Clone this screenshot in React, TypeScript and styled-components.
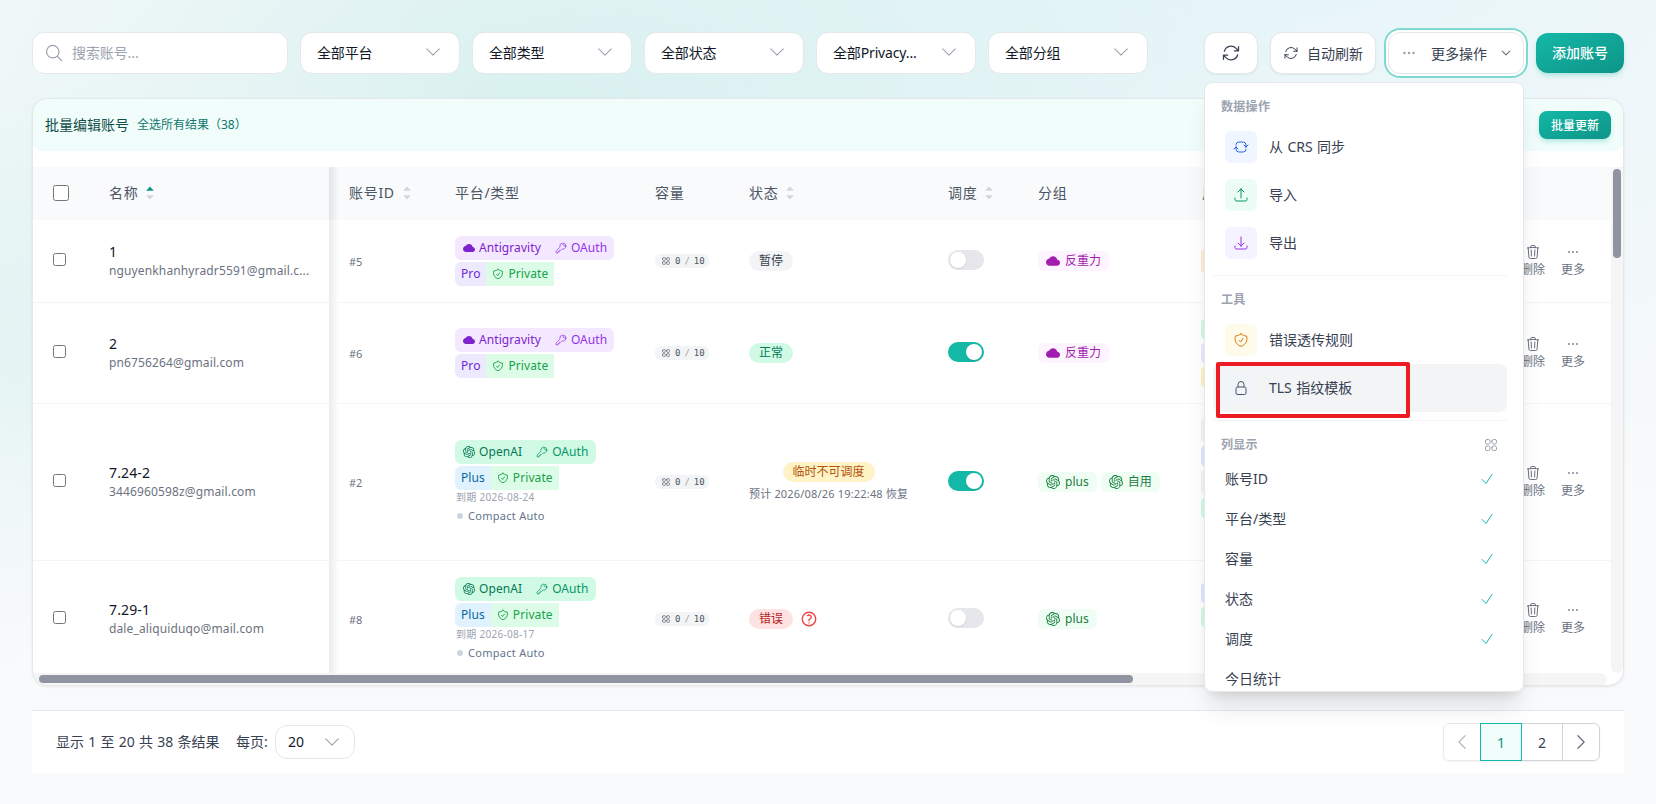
import React from 'react';
import styled, { createGlobalStyle, css } from 'styled-components';
import { SiOpenai } from 'react-icons/si';

const GlobalStyle = createGlobalStyle`
  *, *::before, *::after { box-sizing: border-box; }
  body {
    margin: 0;
    height: 804px;
    overflow: hidden;
    font-family: 'Noto Sans', 'Noto Sans CJK SC', sans-serif;
    font-size: 14px;
    line-height: 20px;
    color: #111827;
    background-color: #f9fafb;
    background-image:
      radial-gradient(at 40% 20%, rgba(20, 184, 166, 0.12) 0px, transparent 50%),
      radial-gradient(at 80% 0%, rgba(6, 182, 212, 0.08) 0px, transparent 50%),
      radial-gradient(at 0% 50%, rgba(20, 184, 166, 0.08) 0px, transparent 50%);
    background-size: 1912px 868px;
    background-position: -256px -64px;
    background-repeat: no-repeat;
  }
  button, input { font-family: inherit; }
`;

/* ---------- icons ---------- */

const paths = {
  refresh:
    'M16.023 9.348h4.992v-.001M2.985 19.644v-4.992m0 0h4.992m-4.993 0l3.181 3.183a8.25 8.25 0 0013.803-3.7M4.031 9.865a8.25 8.25 0 0113.803-3.7l3.181 3.182m0-4.991v4.99',
  search: 'M21 21l-5.197-5.197m0 0A7.5 7.5 0 105.196 5.196a7.5 7.5 0 0010.607 10.607z',
  chevron: 'M19.5 8.25l-7.5 7.5-7.5-7.5',
  left: 'M15.75 19.5L8.25 12l7.5-7.5',
  right: 'M8.25 4.5l7.5 7.5-7.5 7.5',
  sync: 'M19.5 12c0-1.232-.046-2.453-.138-3.662a4.006 4.006 0 00-3.7-3.7 48.678 48.678 0 00-7.324 0 4.006 4.006 0 00-3.7 3.7c-.017.22-.032.441-.046.662M19.5 12l3-3m-3 3l-3-3m-12 3c0 1.232.046 2.453.138 3.662a4.006 4.006 0 003.7 3.7 48.656 48.656 0 007.324 0 4.006 4.006 0 003.7-3.7c.017-.22.032-.441.046-.662M4.5 12l3 3m-3-3l-3 3',
  upload:
    'M3 16.5v2.25A2.25 2.25 0 005.25 21h13.5A2.25 2.25 0 0021 18.75V16.5m-13.5-9L12 3m0 0l4.5 4.5M12 3v13.5',
  download:
    'M3 16.5v2.25A2.25 2.25 0 005.25 21h13.5A2.25 2.25 0 0021 18.75V16.5M16.5 12L12 16.5m0 0L7.5 12m4.5 4.5V3',
  shield:
    'M9 12.75L11.25 15 15 9.75m-3-7.036A11.959 11.959 0 013.598 6 11.99 11.99 0 003 9.749c0 5.592 3.824 10.29 9 11.623 5.176-1.332 9-6.03 9-11.622 0-1.31-.21-2.571-.598-3.751h-.152c-3.196 0-6.1-1.248-8.25-3.285z',
  lock: 'M16.5 10.5V6.75a4.5 4.5 0 10-9 0v3.75m-.75 11.25h10.5a2.25 2.25 0 002.25-2.25v-6.75a2.25 2.25 0 00-2.25-2.25H6.75a2.25 2.25 0 00-2.25 2.25v6.75a2.25 2.25 0 002.25 2.25z',
  trash:
    'M14.74 9l-.346 9m-4.788 0L9.26 9m9.968-3.21c.342.052.682.107 1.022.166m-1.022-.165L18.16 19.673a2.25 2.25 0 01-2.244 2.077H8.084a2.25 2.25 0 01-2.244-2.077L4.772 5.79m14.456 0a48.108 48.108 0 00-3.478-.397m-12 .562c.34-.059.68-.114 1.022-.165m0 0a48.11 48.11 0 013.478-.397m7.5 0v-.916c0-1.18-.91-2.164-2.09-2.201a51.964 51.964 0 00-3.32 0c-1.18.037-2.09 1.022-2.09 2.201v.916m7.5 0a48.667 48.667 0 00-7.5 0',
  key: 'M15.75 5.25a3 3 0 013 3m3 0a6 6 0 01-7.029 5.912c-.563-.097-1.159.026-1.563.43L10.5 17.25H8.25v2.25H6v2.25H2.25v-2.818c0-.597.237-1.17.659-1.591l6.499-6.499c.404-.404.527-1 .43-1.563A6 6 0 1121.75 8.25z',
  grid: 'M3.75 6A2.25 2.25 0 016 3.75h2.25A2.25 2.25 0 0110.5 6v2.25a2.25 2.25 0 01-2.25 2.25H6a2.25 2.25 0 01-2.25-2.25V6zM3.75 15.75A2.25 2.25 0 016 13.5h2.25a2.25 2.25 0 012.25 2.25V18a2.25 2.25 0 01-2.25 2.25H6A2.25 2.25 0 013.75 18v-2.25zM13.5 6a2.25 2.25 0 012.25-2.25H18A2.25 2.25 0 0120.25 6v2.25A2.25 2.25 0 0118 10.5h-2.25a2.25 2.25 0 01-2.25-2.25V6zM13.5 15.75a2.25 2.25 0 012.25-2.25H18a2.25 2.25 0 012.25 2.25V18A2.25 2.25 0 0118 20.25h-2.25A2.25 2.25 0 0113.5 18v-2.25z',
  help: 'M9.879 7.519c1.171-1.025 3.071-1.025 4.242 0 1.172 1.025 1.172 2.687 0 3.712-.203.179-.43.326-.67.442-.745.361-1.45.999-1.45 1.827v.75M21 12a9 9 0 11-18 0 9 9 0 0118 0zm-9 5.25h.008v.008H12v-.008z',
  check: 'M4.5 12.75l6 6 9-13.5',
  dots: 'M6.75 12a.75.75 0 11-1.5 0 .75.75 0 011.5 0zM12.75 12a.75.75 0 11-1.5 0 .75.75 0 011.5 0zM18.75 12a.75.75 0 11-1.5 0 .75.75 0 011.5 0z',
};

type IconName = keyof typeof paths;

const Svg = styled.svg`
  flex: none;
  display: block;
`;

function Icon({ name, size = 16, stroke = 1.5, color }: { name: IconName; size?: number; stroke?: number; color?: string }) {
  return (
    <Svg width={size} height={size} viewBox="0 0 24 24" fill="none" stroke={color ?? 'currentColor'} strokeWidth={stroke} strokeLinecap="round" strokeLinejoin="round">
      <path d={paths[name]} />
    </Svg>
  );
}

function Cloud({ size = 12 }: { size?: number }) {
  return (
    <Svg width={size} height={size} viewBox="0 0 24 24" fill="currentColor">
      <path d="M19.35 10.04C18.67 6.59 15.64 4 12 4 9.11 4 6.6 5.64 5.35 8.04 2.34 8.36 0 10.91 0 14c0 3.31 2.69 6 6 6h13c2.76 0 5-2.24 5-5 0-2.64-2.05-4.78-4.65-4.96z" />
    </Svg>
  );
}

/* ---------- toolbar ---------- */

const Page = styled.main`
  width: 1656px;
  height: 804px;
  padding: 32px;
  display: flex;
  flex-direction: column;
`;

const Toolbar = styled.div`
  display: flex;
  align-items: center;
  gap: 12px;
  height: 42px;
`;

const field = css`
  height: 42px;
  display: flex;
  align-items: center;
  background: #fff;
  border: 1px solid #e5e7eb;
  border-radius: 12px;
`;

const SearchBox = styled.label`
  ${field}
  width: 256px;
  padding: 0 11px 1px;
  gap: 8px;
  color: #9ca3af;
`;

const SearchInput = styled.input`
  border: 0;
  outline: 0;
  padding: 0;
  width: 190px;
  height: 24px;
  font-size: 14px;
  letter-spacing: -0.1px;
  background: transparent;
  &::placeholder { color: #9ca3af; }
`;

const Select = styled.button<{ $small?: boolean }>`
  ${field}
  width: ${(p) => (p.$small ? '80px' : '160px')};
  height: ${(p) => (p.$small ? '34px' : '42px')};
  padding: ${(p) => (p.$small ? '0 12px 1px' : '0 16px 2px')};
  justify-content: space-between;
  font-size: 14px;
  color: #111827;
`;

const FilterText = styled.span`
  letter-spacing: -0.15px;
`;

const Spacer = styled.div`
  flex: 1;
`;

const SecondaryButton = styled.button<{ $w: number; $focus?: boolean; $gap?: number }>`
  ${field}
  width: ${(p) => p.$w}px;
  padding: 0 0 1px;
  justify-content: center;
  gap: ${(p) => p.$gap ?? 8}px;
  font-size: 14px;
  color: #374151;
  box-shadow: ${(p) => (p.$focus ? '0 0 0 2px #fff, 0 0 0 4px #80d9d0' : '0 1px 2px rgba(0, 0, 0, 0.06)')};
`;

const PrimaryButton = styled.button<{ $small?: boolean }>`
  border: 0;
  color: #fff;
  background: linear-gradient(to right bottom, #14b8a6, #0d9488);
  box-shadow: 0 3px 5px -1px rgba(20, 184, 166, 0.35);
  width: ${(p) => (p.$small ? '72px' : '88px')};
  height: ${(p) => (p.$small ? '28px' : '40px')};
  border-radius: ${(p) => (p.$small ? '8px' : '12px')};
  font-size: ${(p) => (p.$small ? '12px' : '14px')};
  font-weight: 500;
  padding: 0 0 ${(p) => (p.$small ? 1 : 2)}px;
`;

const MenuAnchor = styled.div`
  position: relative;
`;

/* ---------- dropdown menu ---------- */

const Menu = styled.div`
  position: absolute;
  z-index: 10;
  top: 50px;
  right: 0;
  width: 320px;
  height: 610px;
  padding: 8px 16px 0 8px;
  overflow: hidden;
  background: #fff;
  border: 1px solid #e5e7eb;
  border-radius: 8px;
  box-shadow: 0 20px 25px -5px rgba(0, 0, 0, 0.1), 0 8px 10px -6px rgba(0, 0, 0, 0.1);
`;

const MenuLabel = styled.div<{ $columns?: boolean }>`
  display: flex;
  align-items: center;
  justify-content: space-between;
  height: ${(p) => (p.$columns ? 30 : 32)}px;
  padding: ${(p) => (p.$columns ? 2 : 0)}px 8px 0;
  font-size: 12px;
  font-weight: 600;
  letter-spacing: 0.3px;
  color: #9ca3af;
`;

const MenuItem = styled.div<{ $active?: boolean }>`
  position: relative;
  display: flex;
  align-items: center;
  gap: 12px;
  height: 48px;
  padding: 0 12px;
  border-radius: 8px;
  word-spacing: 0.8px;
  color: #374151;
  background: ${(p) => (p.$active ? '#f3f4f6' : 'transparent')};
`;

const MenuIcon = styled.span<{ $bg: string; $fg: string }>`
  display: flex;
  align-items: center;
  justify-content: center;
  width: 32px;
  height: 32px;
  border-radius: 6px;
  background: ${(p) => p.$bg};
  color: ${(p) => p.$fg};
`;

const MenuDivider = styled.div`
  height: 1px;
  margin: 8px 0;
  background: #f3f4f6;
`;

const ColumnToggle = styled.div`
  display: flex;
  align-items: center;
  justify-content: space-between;
  height: 40px;
  padding: 0 12px;
  color: #374151;
`;

const Highlight = styled.span`
  position: absolute;
  left: 3px;
  top: -2px;
  width: 194px;
  height: 56px;
  border: 4px solid #ed1c24;
  border-radius: 2px;
`;

/* ---------- table ---------- */

const Card = styled.section`
  margin-top: 24px;
  height: 588px;
  flex: none;
  display: flex;
  flex-direction: column;
  background: #fff;
  border: 1px solid #e5e7eb;
  border-radius: 16px;
  overflow: hidden;
  box-shadow: 0 1px 3px rgba(0, 0, 0, 0.08);
`;

const BulkBar = styled.div`
  display: flex;
  align-items: center;
  justify-content: space-between;
  height: 52px;
  flex: none;
  padding: 0 12px;
  margin-bottom: 16px;
  background: #f0fdfa;
  border-radius: 8px;
  color: #134e4a;
`;

const BulkText = styled.div`
  display: flex;
  align-items: center;
  gap: 8px;
`;

const BulkLink = styled.span`
  font-size: 12px;
  color: #0f766e;
`;

const ScrollArea = styled.div`
  flex: 1;
  min-height: 0;
  display: grid;
  grid-template-columns: 1578px 12px;
  grid-template-rows: 506px 12px;
`;

const Viewport = styled.div`
  overflow: hidden;
`;

const VTrack = styled.div`
  padding: 2px;
  background: #f5f5f6;
  border-radius: 0 0 6px 6px;
`;

const VThumb = styled.div`
  width: 8px;
  height: 89px;
  border-radius: 4px;
  background: #9094a0;
`;

const HTrack = styled.div`
  width: 1574px;
  padding: 2px 6px;
  background: #f5f5f6;
  border-radius: 0 6px 6px 0;
`;

const HThumb = styled.div`
  width: 1094px;
  height: 8px;
  border-radius: 4px;
  background: #9094a0;
`;

const gridRow = css`
  display: grid;
  grid-template-columns: 56px 240px 106px 200px 94px 199px 90px 164px 1fr 110px;
`;

const HeadRow = styled.div`
  ${gridRow}
  height: 53px;
  background: #f9fafb;
`;

const Row = styled.div<{ $h: number }>`
  ${gridRow}
  height: ${(p) => p.$h}px;
  border-bottom: 1px solid #f3f4f6;
`;

const Cell = styled.div`
  display: flex;
  align-items: center;
  padding-left: 20px;
  min-width: 0;
`;

function edge(alpha: string) {
  return css`
    &::after {
      content: '';
      position: absolute;
      left: 100%;
      top: 0;
      bottom: 0;
      width: 10px;
      background: linear-gradient(to right, rgba(0, 0, 0, ${alpha}), transparent);
    }
  `;
}

const HeadCell = styled(Cell)<{ $edge?: boolean }>`
  position: relative;
  gap: 8px;
  padding-bottom: 2px;
  color: #4b5563;
  letter-spacing: 0.7px;
  ${(p) => p.$edge && edge('0.09')}
`;

const Check = styled.input<{ $size: number; $lift: number }>`
  width: ${(p) => p.$size}px;
  height: ${(p) => p.$size}px;
  margin: 0 0 ${(p) => p.$lift}px;
`;

const NameCell = styled(Cell)`
  position: relative;
  ${edge('0.08')}
`;

const NameStack = styled.div`
  display: flex;
  flex-direction: column;
  color: #111827;
`;

const Name = styled.span`
  height: 20px;
  line-height: 20px;
  letter-spacing: 0.12px;
`;

const Email = styled.span`
  height: 18px;
  line-height: 18px;
  white-space: nowrap;
  font-size: 12px;
  letter-spacing: 0.13px;
  color: #6b7280;
`;

const IdText = styled.span`
  margin-top: 2px;
  font-size: 11px;
  letter-spacing: -0.1px;
  color: #6b7280;
`;

const PlatformCell = styled(Cell)<{ $dated: boolean }>`
  flex-direction: column;
  align-items: flex-start;
  justify-content: center;
  gap: 2px;
  padding-top: ${(p) => (p.$dated ? 2 : 0)}px;
  font-size: 12px;
`;

const tones = {
  violet: { bg: '#f3e8ff', fg: '#7e22ce', soft: '#9333ea', planBg: '#ede9fe', planFg: '#6d28d9' },
  green: { bg: '#d1fae5', fg: '#047857', soft: '#059669', planBg: '#e0f2fe', planFg: '#0369a1' },
};

const PlatformBadge = styled.div<{ $bg: string }>`
  display: flex;
  height: 24px;
  border-radius: 6px;
  overflow: hidden;
  background: ${(p) => p.$bg};
`;

const BadgePart = styled.span<{ $fg: string; $bg?: string; $pad: string }>`
  display: flex;
  align-items: center;
  gap: 4px;
  padding: ${(p) => p.$pad};
  letter-spacing: 0.08px;
  color: ${(p) => p.$fg};
  background: ${(p) => p.$bg ?? 'transparent'};
`;

const PlanBadge = styled.div`
  display: flex;
  height: 24px;
  border-radius: 6px 0 0 6px;
  overflow: hidden;
`;

const Expiry = styled.span`
  height: 14px;
  line-height: 14px;
  margin: -2px 0 0 1px;
  font-size: 10px;
  letter-spacing: 0.28px;
  color: #9ca3af;
`;

const Compact = styled.span`
  display: flex;
  align-items: center;
  gap: 5px;
  height: 20px;
  padding-left: 2px;
  font-size: 11px;
  letter-spacing: 0.28px;
  color: #64748b;
  &::before {
    content: '';
    width: 6px;
    height: 6px;
    border-radius: 50%;
    background: #cbd5e1;
  }
`;

const Capacity = styled.span`
  display: flex;
  align-items: center;
  gap: 4px;
  width: 54px;
  height: 14px;
  padding-left: 6px;
  border-radius: 6px;
  background: #f3f4f6;
  color: #4b5563;
  font: 500 9px/14px 'DejaVu Sans Mono', monospace;
`;

const Slash = styled.span`
  color: #9ca3af;
`;

const StatusCell = styled(Cell)`
  gap: 7px;
`;

const StatusStack = styled.div`
  display: flex;
  flex-direction: column;
  align-items: center;
  gap: 4px;
`;

const Pill = styled.span<{ $bg: string; $fg: string }>`
  height: 20px;
  padding: 0 10px;
  border-radius: 10px;
  font-size: 12px;
  line-height: 19px;
  background: ${(p) => p.$bg};
  color: ${(p) => p.$fg};
`;

const Recover = styled.span`
  height: 16px;
  font-size: 11px;
  line-height: 16px;
  letter-spacing: 0.18px;
  white-space: nowrap;
  color: #6b7280;
`;

const Switch = styled.span<{ $on: boolean }>`
  display: flex;
  justify-content: ${(p) => (p.$on ? 'flex-end' : 'flex-start')};
  width: 36px;
  height: 20px;
  padding: 2px;
  margin-bottom: 2px;
  border-radius: 10px;
  background: ${(p) => (p.$on ? '#14b8a6' : '#e5e7eb')};
  &::before {
    content: '';
    width: 16px;
    height: 16px;
    border-radius: 50%;
    background: #fff;
    box-shadow: 0 1px 2px rgba(0, 0, 0, 0.1);
  }
`;

const GroupCell = styled(Cell)`
  gap: 4px;
`;

const Group = styled.span<{ $tone: 'fuchsia' | 'green' }>`
  display: flex;
  align-items: center;
  gap: 5px;
  height: 20px;
  padding: 0 8px;
  border-radius: 6px;
  font-size: 12px;
  background: ${(p) => (p.$tone === 'green' ? '#f0fdf4' : '#fdf4ff')};
  color: ${(p) => (p.$tone === 'green' ? '#15803d' : '#a21caf')};
`;

const UsageCell = styled(Cell)<{ $bottom: number }>`
  flex-direction: column;
  align-items: flex-start;
  justify-content: center;
  gap: 4px;
  padding-left: 19px;
  padding-bottom: ${(p) => p.$bottom}px;
`;

const UsageBar = styled.span<{ $bg: string; $h: number }>`
  width: 56px;
  height: ${(p) => p.$h}px;
  border-radius: 4px;
  background: ${(p) => p.$bg};
`;

const ActionCell = styled.div`
  display: flex;
  align-items: center;
  gap: 16px;
  padding-left: 20px;
`;

const Action = styled.span`
  display: flex;
  flex-direction: column;
  align-items: center;
  gap: 2px;
  font-size: 12px;
  line-height: 16px;
  color: #6b7280;
`;

function Sort({ up }: { up?: boolean }) {
  return (
    <Svg width="8" height="14" viewBox="0 0 8 14">
      <path d="M4 0.5L7.8 4.7H0.2z" fill={up ? '#0d9488' : '#d1d5db'} />
      <path d="M4 13.5L7.8 9.3H0.2z" fill="#d1d5db" />
    </Svg>
  );
}

interface Account {
  name: string;
  email: string;
  id: string;
  openai?: boolean;
  expiry?: string;
  status: 'paused' | 'ok' | 'temp' | 'error';
  on: boolean;
  groups: string[];
  usage: [string, number][];
  usageBottom: number;
  height: number;
}

const accounts: Account[] = [
  { name: '1', email: 'nguyenkhanhyradr5591@gmail.c...', id: '#5', status: 'paused', on: false, groups: ['反重力'], usage: [['#ffedd5', 24]], usageBottom: 0, height: 83 },
  { name: '2', email: 'pn6756264@gmail.com', id: '#6', status: 'ok', on: true, groups: ['反重力'], usage: [['#d1fae5', 20], ['#ede9fe', 20], ['#fef3c7', 20]], usageBottom: 0, height: 101 },
  { name: '7.24-2', email: '3446960598z@gmail.com', id: '#2', openai: true, expiry: '2026-08-24', status: 'temp', on: true, groups: ['plus', '自用'], usage: [['#f3f4f6', 24], ['#e0e7ff', 20], ['#f3f4f6', 24], ['#d1fae5', 20]], usageBottom: 28, height: 157 },
  { name: '7.29-1', email: 'dale_aliquiduqo@mail.com', id: '#8', openai: true, expiry: '2026-08-17', status: 'error', on: false, groups: ['plus'], usage: [['#e0e7ff', 20], ['#d1fae5', 20]], usageBottom: 28, height: 117 },
];

function Status({ kind }: { kind: Account['status'] }) {
  if (kind === 'paused') return <Pill $bg="#f3f4f6" $fg="#374151">暂停</Pill>;
  if (kind === 'ok') return <Pill $bg="#d1fae5" $fg="#047857">正常</Pill>;
  if (kind === 'error')
    return (
      <>
        <Pill $bg="#fee2e2" $fg="#b91c1c">错误</Pill>
        <Icon name="help" size={18} stroke={1.8} color="#ef4444" />
      </>
    );
  return (
    <StatusStack>
      <Pill $bg="#fef3c7" $fg="#b45309">临时不可调度</Pill>
      <Recover>预计 2026/08/26 19:22:48 恢复</Recover>
    </StatusStack>
  );
}

function AccountRow({ a }: { a: Account }) {
  const t = a.openai ? tones.green : tones.violet;
  return (
    <Row $h={a.height}>
      <Cell><Check type="checkbox" $size={13} $lift={4} /></Cell>
      <NameCell>
        <NameStack>
          <Name>{a.name}</Name>
          <Email>{a.email}</Email>
        </NameStack>
      </NameCell>
      <Cell><IdText>{a.id}</IdText></Cell>
      <PlatformCell $dated={!!a.expiry}>
        <PlatformBadge $bg={t.bg}>
          <BadgePart $fg={t.fg} $pad="0 7px 0 8px">
            {a.openai ? <SiOpenai size={12} /> : <Cloud />}
            {a.openai ? 'OpenAI' : 'Antigravity'}
          </BadgePart>
          <BadgePart $fg={t.soft} $pad="0 7px">
            <Icon name="key" size={12} />
            OAuth
          </BadgePart>
        </PlatformBadge>
        <PlanBadge>
          <BadgePart $fg={t.planFg} $bg={t.planBg} $pad="0 6px">{a.openai ? 'Plus' : 'Pro'}</BadgePart>
          <BadgePart $fg="#16a34a" $bg="#dcfce7" $pad="0 6px">
            <Icon name="shield" size={12} stroke={1.8} />
            Private
          </BadgePart>
        </PlanBadge>
        {a.expiry && (
          <>
            <Expiry>到期 {a.expiry}</Expiry>
            <Compact>Compact Auto</Compact>
          </>
        )}
      </PlatformCell>
      <Cell>
        <Capacity>
          <Icon name="grid" size={10} stroke={2} color="#6b7280" />
          <span>0</span>
          <Slash>/</Slash>
          <span>10</span>
        </Capacity>
      </Cell>
      <StatusCell><Status kind={a.status} /></StatusCell>
      <Cell><Switch $on={a.on} /></Cell>
      <GroupCell>
        {a.groups.map((g) => (
          <Group key={g} $tone={a.openai ? 'green' : 'fuchsia'}>
            {a.openai ? <SiOpenai size={14} /> : <Cloud size={14} />}
            {g}
          </Group>
        ))}
      </GroupCell>
      <UsageCell $bottom={a.usageBottom}>
        {a.usage.map(([bg, h], i) => <UsageBar key={i} $bg={bg} $h={h} />)}
      </UsageCell>
      <ActionCell>
        <Action><Icon name="trash" size={16} />删除</Action>
        <Action><Icon name="dots" size={16} stroke={1.7} color="#8b92a0" />更多</Action>
      </ActionCell>
    </Row>
  );
}

/* ---------- pagination ---------- */

const Pagination = styled.footer`
  margin-top: 24px;
  height: 63px;
  flex: none;
  display: flex;
  align-items: center;
  padding: 0 24px;
  background: #fff;
  border-top: 1px solid #e5e7eb;
  color: #374151;
`;

const Summary = styled.span`
  width: 164px;
  margin-right: 16px;
  white-space: nowrap;
  word-spacing: 0.6px;
`;

const PerPage = styled.span`
  width: 31px;
  margin-right: 8px;
  white-space: nowrap;
`;

const Pager = styled.nav`
  display: flex;
  height: 38px;
  margin-left: auto;
  border-radius: 6px;
  box-shadow: 0 1px 2px rgba(0, 0, 0, 0.05);
`;

const PageButton = styled.button<{ $w: number; $kind?: 'first' | 'last' | 'active' }>`
  display: flex;
  align-items: center;
  justify-content: center;
  width: ${(p) => p.$w}px;
  height: 38px;
  padding: 0;
  margin-left: ${(p) => (p.$kind === 'first' ? 0 : '-1px')};
  font-size: 14px;
  color: #374151;
  background: #fff;
  border: 1px solid #d1d5db;
  ${(p) => p.$kind === 'first' && 'border-radius: 6px 0 0 6px; border-color: #e8eaed; color: #b5b9c1;'}
  ${(p) => p.$kind === 'last' && 'border-radius: 0 6px 6px 0; color: #6b7280;'}
  ${(p) => p.$kind === 'active' && 'position: relative; background: #f0fdfa; border-color: #14b8a6; color: #0d9488;'}
`;

const filters = ['全部平台', '全部类型', '全部状态', '全部Privacy...', '全部分组'];
const columns = ['账号ID', '平台/类型', '容量', '状态', '调度', '今日统计'];

export default function App() {
  return (
    <Page>
      <GlobalStyle />
      <Toolbar>
        <SearchBox>
          <Icon name="search" size={20} />
          <SearchInput placeholder="搜索账号..." />
        </SearchBox>
        {filters.map((f) => (
          <Select key={f}>
            <FilterText>{f}</FilterText>
            <Icon name="chevron" size={20} stroke={1.3} color="#9ca3af" />
          </Select>
        ))}
        <Spacer />
        <SecondaryButton $w={54}><Icon name="refresh" size={20} /></SecondaryButton>
        <SecondaryButton $w={106}><Icon name="refresh" size={16} />自动刷新</SecondaryButton>
        <MenuAnchor>
          <SecondaryButton $w={136} $focus $gap={13}>
            <Icon name="dots" size={18} stroke={1.8} color="#9ca3af" />
            更多操作
            <Icon name="chevron" size={12} stroke={2.2} color="#6b7280" />
          </SecondaryButton>
          <Menu>
            <MenuLabel>数据操作</MenuLabel>
            <MenuItem><MenuIcon $bg="#eff6ff" $fg="#2563eb"><Icon name="sync" /></MenuIcon>从 CRS 同步</MenuItem>
            <MenuItem><MenuIcon $bg="#ecfdf5" $fg="#059669"><Icon name="upload" /></MenuIcon>导入</MenuItem>
            <MenuItem><MenuIcon $bg="#f5f3ff" $fg="#9333ea"><Icon name="download" /></MenuIcon>导出</MenuItem>
            <MenuDivider />
            <MenuLabel>工具</MenuLabel>
            <MenuItem><MenuIcon $bg="#fffbeb" $fg="#d97706"><Icon name="shield" /></MenuIcon>错误透传规则</MenuItem>
            <MenuItem $active>
              <MenuIcon $bg="#f1f5f9" $fg="#475569"><Icon name="lock" /></MenuIcon>TLS 指纹模板
              <Highlight />
            </MenuItem>
            <MenuDivider />
            <MenuLabel $columns>列显示<Icon name="grid" size={16} /></MenuLabel>
            {columns.map((c, i) => (
              <ColumnToggle key={c}>
                {c}
                {i < 5 && <Icon name="check" size={16} color="#14b8a6" />}
              </ColumnToggle>
            ))}
          </Menu>
        </MenuAnchor>
        <PrimaryButton>添加账号</PrimaryButton>
      </Toolbar>

      <Card>
        <BulkBar>
          <BulkText>
            批量编辑账号
            <BulkLink>全选所有结果（38）</BulkLink>
          </BulkText>
          <PrimaryButton $small>批量更新</PrimaryButton>
        </BulkBar>
        <ScrollArea>
          <Viewport>
            <HeadRow>
              <HeadCell><Check type="checkbox" $size={16} $lift={0} /></HeadCell>
              <HeadCell $edge>名称<Sort up /></HeadCell>
              <HeadCell>账号ID<Sort /></HeadCell>
              <HeadCell>平台/类型</HeadCell>
              <HeadCell>容量</HeadCell>
              <HeadCell>状态<Sort /></HeadCell>
              <HeadCell>调度<Sort /></HeadCell>
              <HeadCell>分组</HeadCell>
              <HeadCell>用量窗口</HeadCell>
              <HeadCell />
            </HeadRow>
            {accounts.map((a) => <AccountRow key={a.id} a={a} />)}
          </Viewport>
          <VTrack><VThumb /></VTrack>
          <HTrack><HThumb /></HTrack>
        </ScrollArea>
      </Card>

      <Pagination>
        <Summary>显示 1 至 20 共 38 条结果</Summary>
        <PerPage>每页:</PerPage>
        <Select $small><span>20</span><Icon name="chevron" size={20} stroke={1.3} color="#9ca3af" /></Select>
        <Pager>
          <PageButton $w={38} $kind="first"><Icon name="left" size={20} /></PageButton>
          <PageButton $w={42} $kind="active">1</PageButton>
          <PageButton $w={42}>2</PageButton>
          <PageButton $w={38} $kind="last"><Icon name="right" size={20} /></PageButton>
        </Pager>
      </Pagination>
    </Page>
  );
}
